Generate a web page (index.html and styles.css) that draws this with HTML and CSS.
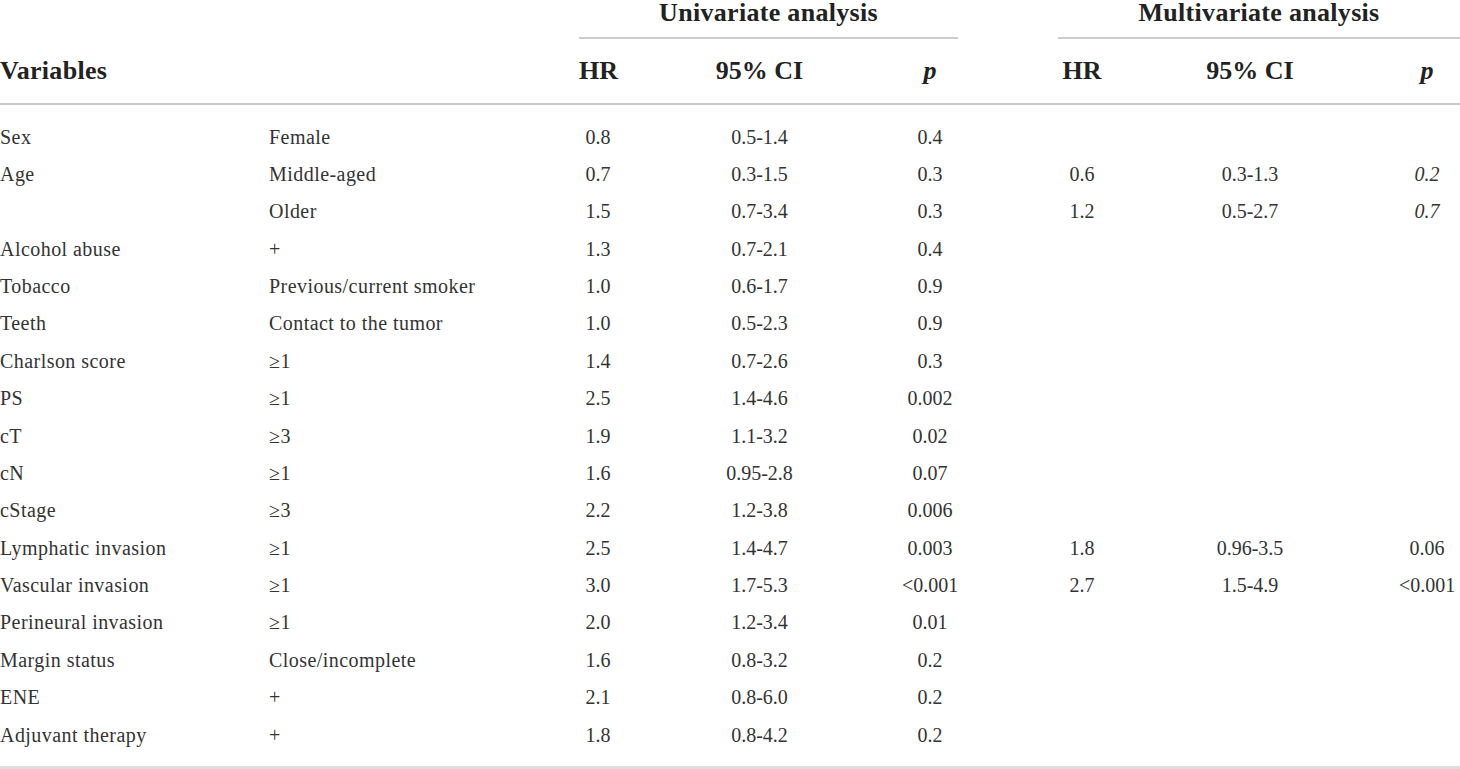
FILE: index.html
```html
<!DOCTYPE html>
<html lang="en">
<head>
<meta charset="utf-8">
<title>Cox regression table</title>
<link rel="stylesheet" href="styles.css">
</head>
<body>
<table class="tbl">
  <colgroup>
    <col class="c-var"><col class="c-sub"><col class="c-hr1"><col class="c-ci1"><col class="c-p1">
    <col class="c-gap"><col class="c-hr2"><col class="c-ci2"><col class="c-p2">
  </colgroup>
  <thead>
    <tr class="group-row">
      <th colspan="2"></th>
      <th colspan="3" class="group">Univariate analysis</th>
      <th></th>
      <th colspan="3" class="group">Multivariate analysis</th>
    </tr>
    <tr class="head-row">
      <th class="left">Variables</th>
      <th></th>
      <th>HR</th>
      <th>95% CI</th>
      <th><i>p</i></th>
      <th></th>
      <th>HR</th>
      <th>95% CI</th>
      <th><i>p</i></th>
    </tr>
  </thead>
  <tbody>
    <tr><td class="left">Sex</td><td class="left">Female</td><td>0.8</td><td>0.5-1.4</td><td>0.4</td><td></td><td></td><td></td><td></td></tr>
    <tr><td class="left">Age</td><td class="left">Middle-aged</td><td>0.7</td><td>0.3-1.5</td><td>0.3</td><td></td><td>0.6</td><td>0.3-1.3</td><td><i>0.2</i></td></tr>
    <tr><td class="left"></td><td class="left">Older</td><td>1.5</td><td>0.7-3.4</td><td>0.3</td><td></td><td>1.2</td><td>0.5-2.7</td><td><i>0.7</i></td></tr>
    <tr><td class="left">Alcohol abuse</td><td class="left">+</td><td>1.3</td><td>0.7-2.1</td><td>0.4</td><td></td><td></td><td></td><td></td></tr>
    <tr><td class="left">Tobacco</td><td class="left">Previous/current smoker</td><td>1.0</td><td>0.6-1.7</td><td>0.9</td><td></td><td></td><td></td><td></td></tr>
    <tr><td class="left">Teeth</td><td class="left">Contact to the tumor</td><td>1.0</td><td>0.5-2.3</td><td>0.9</td><td></td><td></td><td></td><td></td></tr>
    <tr><td class="left">Charlson score</td><td class="left">≥1</td><td>1.4</td><td>0.7-2.6</td><td>0.3</td><td></td><td></td><td></td><td></td></tr>
    <tr><td class="left">PS</td><td class="left">≥1</td><td>2.5</td><td>1.4-4.6</td><td>0.002</td><td></td><td></td><td></td><td></td></tr>
    <tr><td class="left">cT</td><td class="left">≥3</td><td>1.9</td><td>1.1-3.2</td><td>0.02</td><td></td><td></td><td></td><td></td></tr>
    <tr><td class="left">cN</td><td class="left">≥1</td><td>1.6</td><td>0.95-2.8</td><td>0.07</td><td></td><td></td><td></td><td></td></tr>
    <tr><td class="left">cStage</td><td class="left">≥3</td><td>2.2</td><td>1.2-3.8</td><td>0.006</td><td></td><td></td><td></td><td></td></tr>
    <tr><td class="left">Lymphatic invasion</td><td class="left">≥1</td><td>2.5</td><td>1.4-4.7</td><td>0.003</td><td></td><td>1.8</td><td>0.96-3.5</td><td>0.06</td></tr>
    <tr><td class="left">Vascular invasion</td><td class="left">≥1</td><td>3.0</td><td>1.7-5.3</td><td>&lt;0.001</td><td></td><td>2.7</td><td>1.5-4.9</td><td>&lt;0.001</td></tr>
    <tr><td class="left">Perineural invasion</td><td class="left">≥1</td><td>2.0</td><td>1.2-3.4</td><td>0.01</td><td></td><td></td><td></td><td></td></tr>
    <tr><td class="left">Margin status</td><td class="left">Close/incomplete</td><td>1.6</td><td>0.8-3.2</td><td>0.2</td><td></td><td></td><td></td><td></td></tr>
    <tr><td class="left">ENE</td><td class="left">+</td><td>2.1</td><td>0.8-6.0</td><td>0.2</td><td></td><td></td><td></td><td></td></tr>
    <tr><td class="left">Adjuvant therapy</td><td class="left">+</td><td>1.8</td><td>0.8-4.2</td><td>0.2</td><td></td><td></td><td></td><td></td></tr>
  </tbody>
</table>
</body>
</html>
```

FILE: styles.css
```css
html, body {
  margin: 0;
  padding: 0;
  background: #ffffff;
}

.tbl {
  width: 1460px;
  table-layout: fixed;
  border-collapse: separate;
  border-spacing: 0;
  font-family: "Liberation Serif", "Times New Roman", serif;
  color: #333333;
}

.c-var { width: 269px; }
.c-sub { width: 310px; }
.c-hr1 { width: 38px; }
.c-ci1 { width: 285px; }
.c-p1 { width: 56px; }
.c-gap { width: 100px; }
.c-hr2 { width: 48px; }
.c-ci2 { width: 288px; }
.c-p2 { width: 66px; }

.tbl th {
  font-size: 26px;
  line-height: 25px;
  font-weight: bold;
  color: #222222;
  text-align: center;
  padding: 0;
  white-space: nowrap;
}

.tbl th.left,
.tbl td.left {
  text-align: left;
}

.tbl th.left {
  letter-spacing: 0.3px;
}

.group-row th {
  padding: 0 0 12px 0;
  vertical-align: top;
}

.group-row th.group {
  border-bottom: 2px solid #cccccc;
  letter-spacing: 0.3px;
}

.head-row th {
  padding: 19px 0 20px 0;
  border-bottom: 2px solid #c8c8c8;
  vertical-align: top;
}

.tbl td {
  font-size: 20px;
  line-height: 37.375px;
  padding: 0;
  text-align: center;
  white-space: nowrap;
  vertical-align: top;
}

.tbl td.left {
  letter-spacing: 0.45px;
}

.tbl tbody tr:first-child td {
  padding-top: 13.6px;
}

.tbl tbody tr:last-child td {
  padding-bottom: 12px;
  border-bottom: 3px solid #dddddd;
}
```
